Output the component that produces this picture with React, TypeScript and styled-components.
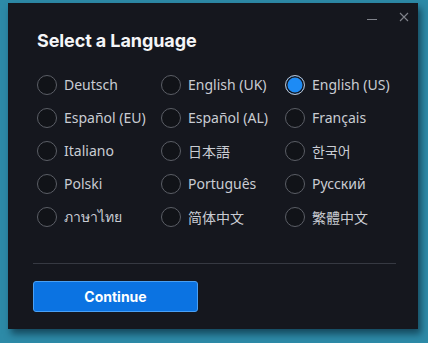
import React, { useState } from 'react';
import styled, { createGlobalStyle } from 'styled-components';

const GlobalStyle = createGlobalStyle`
  html, body {
    margin: 0;
    padding: 0;
    background: #2d8aa7;
    width: 428px;
    height: 343px;
    overflow: hidden;
  }
`;

const Page = styled.div`
  padding: 3px 0 0 8px;
`;

const Window = styled.div`
  width: 410px;
  height: 326px;
  background: #15171e;
  box-shadow: 3px 5px 7px rgba(0, 20, 35, 0.55);
  display: flex;
  flex-direction: column;
  box-sizing: border-box;
`;

const TitleBar = styled.div`
  height: 27px;
  display: flex;
  justify-content: flex-end;
  align-items: center;
  gap: 20px;
  padding: 0 8px 0 0;
`;

const WinButton = styled.div`
  width: 12px;
  height: 12px;
  display: flex;
  align-items: center;
  justify-content: center;
`;

const Content = styled.div`
  padding: 0 22px 0 25px;
  display: flex;
  flex-direction: column;
`;

const Title = styled.h1`
  margin: 0 0 0 4px;
  font-family: Inter, 'Liberation Sans', sans-serif;
  font-weight: 700;
  font-size: 18px;
  line-height: 22px;
  color: #f4f5f7;
  letter-spacing: -0.1px;
`;

const Grid = styled.div`
  margin: 16px 0 0 4px;
  display: grid;
  grid-template-columns: repeat(3, 124px);
  grid-auto-rows: 33px;
`;

const Option = styled.label`
  display: flex;
  align-items: center;
  gap: 7px;
  cursor: pointer;
  font-family: 'Noto Sans', 'Noto Sans CJK JP', sans-serif;
  font-size: 14px;
  color: #c9ccd3;
  white-space: nowrap;
`;

const Radio = styled.span<{ $checked: boolean }>`
  width: 20px;
  height: 20px;
  box-sizing: border-box;
  border-radius: 50%;
  border: 1.5px solid ${(p) => (p.$checked ? '#b9bcc4' : '#5b5e66')};
  background: ${(p) => (p.$checked ? '#1d8bf5' : '#111318')};
  box-shadow: ${(p) => (p.$checked ? 'inset 0 0 0 1.5px #15171e' : 'none')};
  flex-shrink: 0;
`;

const Divider = styled.div`
  margin-top: 30px;
  height: 1px;
  background: #363942;
`;

const Button = styled.button`
  margin-top: 17px;
  width: 165px;
  height: 31px;
  border-radius: 3px;
  border: 1.5px solid #4aa0f4;
  background: #0b73e2;
  color: #fff;
  font-family: Inter, 'Liberation Sans', sans-serif;
  font-weight: 700;
  font-size: 14px;
  cursor: pointer;
`;

const languages = [
  'Deutsch',
  'English (UK)',
  'English (US)',
  'Español (EU)',
  'Español (AL)',
  'Français',
  'Italiano',
  '日本語',
  '한국어',
  'Polski',
  'Português',
  'Русский',
  'ภาษาไทย',
  '简体中文',
  '繁體中文',
];

export default function App() {
  const [selected, setSelected] = useState('English (US)');

  return (
    <>
      <GlobalStyle />
      <Page>
        <Window>
          <TitleBar>
            <WinButton>
              <svg width="11" height="11" viewBox="0 0 11 11">
                <line x1="0" y1="8.5" x2="10" y2="8.5" stroke="#80838b" strokeWidth="1" />
              </svg>
            </WinButton>
            <WinButton>
              <svg width="10" height="10" viewBox="0 0 10 10">
                <path d="M1 1L9 9M9 1L1 9" stroke="#80838b" strokeWidth="1.1" />
              </svg>
            </WinButton>
          </TitleBar>
          <Content>
            <Title>Select a Language</Title>
            <Grid>
              {languages.map((lang) => (
                <Option key={lang} onClick={() => setSelected(lang)}>
                  <Radio $checked={selected === lang} />
                  {lang}
                </Option>
              ))}
            </Grid>
            <Divider />
            <Button>Continue</Button>
          </Content>
        </Window>
      </Page>
    </>
  );
}
